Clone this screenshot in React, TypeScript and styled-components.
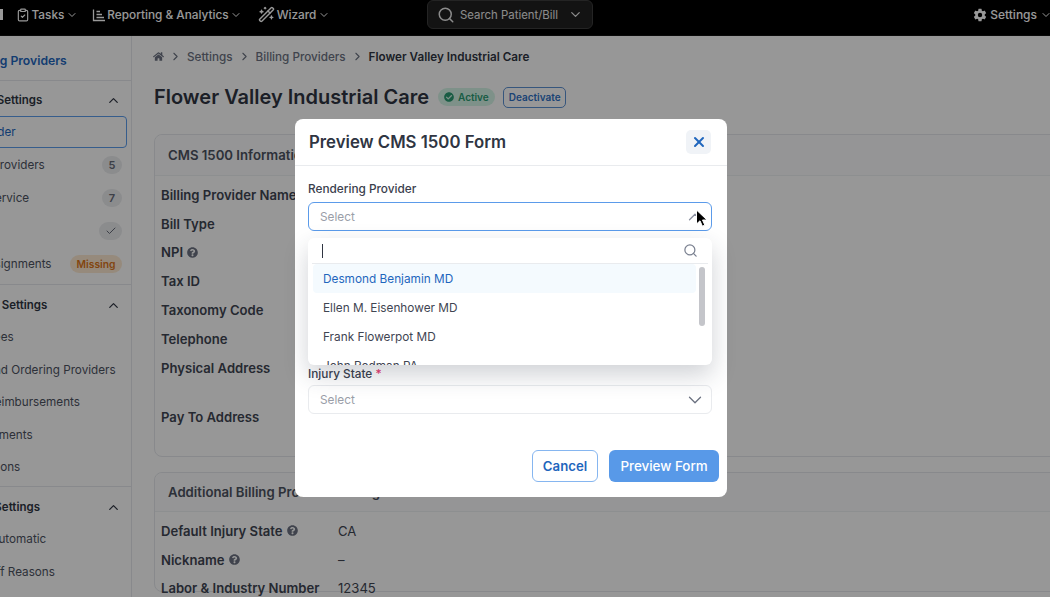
import React, { FC } from 'react';
import styled, { createGlobalStyle } from 'styled-components';
import {
  ChevronDown,
  ChevronUp,
  ChevronRight,
  ClipboardCheck,
  WandSparkles,
  Search,
  Check,
  X,
} from 'lucide-react';
import { FaHome, FaQuestionCircle, FaCheckCircle } from 'react-icons/fa';
import { IoSettingsSharp } from 'react-icons/io5';

const GlobalStyle = createGlobalStyle`
  * {
    margin: 0;
    box-sizing: border-box;
  }
  html, body {
    width: 100%;
    height: 100%;
    overflow: hidden;
    background: #fcfcfc;
    font-family: Inter, "Liberation Sans", sans-serif;
    color: #2f3542;
  }
`;

const Root = styled.div`
  position: relative;
  width: 1050px;
  height: 597px;
  overflow: hidden;
`;

// Top bar ========================================================================================

const TopBar = styled.header`
  height: 36px;
  background: #000;
  display: grid;
  grid-template-columns: 427px 166px 1fr;
  color: #fff;
  border-bottom: 1px solid #111;
`;

const NavLeft = styled.nav`
  display: flex;
  align-items: center;
  height: 29px;
`;

const LogoStub = styled.span`
  width: 3px;
  height: 11px;
  background: #fff;
  margin-right: 13px;
`;

const NavItem = styled.span<{ $gap: number }>`
  display: flex;
  align-items: center;
  gap: 1.5px;
  font-size: 11.8px;
  font-weight: 500;
  margin-right: ${(p) => p.$gap}px;
  white-space: nowrap;
`;

const SearchBox = styled.div`
  height: 29px;
  display: flex;
  align-items: center;
  gap: 5px;
  padding: 0 9px;
  background: #202020;
  border: 1px solid #3c3c3c;
  border-radius: 6px;
  font-size: 11.4px;
  white-space: nowrap;
  color: #e8e8e8;
  svg:last-child {
    margin-left: auto;
  }
`;

const NavRight = styled.div`
  display: flex;
  align-items: center;
  justify-content: flex-end;
  height: 29px;
  gap: 3px;
  font-size: 12px;
  font-weight: 500;
  white-space: nowrap;
  margin-right: -2px;
`;

// Page ===========================================================================================

const Body = styled.div`
  display: flex;
  margin-left: -40px;
  height: 561px;
`;

const Sidebar = styled.aside`
  width: 172px;
  flex: none;
  border-right: 1px solid #e3e5ea;
`;

const SideTitle = styled.div`
  height: 45px;
  padding: 4px 0 0 11.5px;
  display: flex;
  align-items: center;
  font-size: 12.2px;
  font-weight: 600;
  color: #1f66bd;
  border-bottom: 1px solid #e3e5ea;
`;

const SideHead = styled.div`
  height: 36px;
  padding: 4px 10px 0 0;
  display: flex;
  align-items: center;
  justify-content: space-between;
  font-size: 11.5px;
  font-weight: 600;
  white-space: nowrap;
`;

const SideItem = styled.div<{ $active?: boolean }>`
  height: ${(p) => (p.$active ? 32 : 33)}px;
  margin: ${(p) => (p.$active ? '-1px 4px 0 0' : '0 9px 0 0')};
  padding-left: 27.4px;
  padding-right: ${(p) => (p.$active ? 5 : 0)}px;
  display: flex;
  align-items: center;
  justify-content: space-between;
  font-size: 11.7px;
  color: ${(p) => (p.$active ? '#1f66bd' : '#4c5260')};
  white-space: nowrap;
  border: ${(p) => (p.$active ? '1px solid #5b9bea' : 'none')};
  border-radius: 4px;
`;

const SideSection = styled.section<{ $dense?: boolean }>`
  padding-bottom: ${(p) => (p.$dense ? 2.5 : 4)}px;
  & + & {
    border-top: 1px solid #e3e5ea;
  }
  ${SideHead} {
    padding-top: ${(p) => (p.$dense ? 4 : 2)}px;
  }
  ${SideItem} {
    ${(p) => (p.$dense ? 'height: 32.5px;' : '')}
  }
`;

const ShiftedLabel = styled.span<{ $shift: number }>`
  margin-left: ${(p) => p.$shift}px;
`;

const CountBadge = styled.span`
  min-width: 20px;
  height: 18px;
  border-radius: 9px;
  background: #e8e9ec;
  display: flex;
  align-items: center;
  justify-content: center;
  font-size: 11px;
  font-weight: 600;
  color: #666b78;
`;

const CheckBadge = styled(CountBadge)`
  width: 23px;
`;

const MissingBadge = styled.span`
  height: 18px;
  padding: 0 6.5px;
  border-radius: 9px;
  background: #fbe7cf;
  display: flex;
  align-items: center;
  font-size: 10.3px;
  font-weight: 600;
  color: #d9741a;
`;

const Main = styled.main`
  flex: 1;
  min-width: 0;
  padding: 12px 0 0 22px;
`;

const Crumbs = styled.div`
  display: flex;
  align-items: center;
  gap: 5px;
  height: 17px;
  font-size: 11.7px;
  font-weight: 500;
  color: #6b7180;
`;

const HomeIcon = styled(FaHome)`
  margin-left: -1px;
`;

const CrumbCurrent = styled.span`
  color: #2f3542;
  font-weight: 600;
`;

const TitleRow = styled.div`
  display: flex;
  align-items: center;
  margin-top: 19px;
  height: 26px;
`;

const PageTitle = styled.h1`
  font-size: 20px;
  font-weight: 600;
  color: #2f3542;
  white-space: nowrap;
`;

const StatusPill = styled.span`
  margin-left: 9px;
  height: 18px;
  padding: 0 6px;
  display: flex;
  align-items: center;
  gap: 4px;
  border-radius: 9px;
  background: #d3f2e4;
  color: #2a9a72;
  font-size: 10px;
  font-weight: 600;
`;

const OutlineButton = styled.span`
  margin-left: 8.5px;
  height: 21px;
  padding: 0 4.5px;
  display: flex;
  align-items: center;
  border: 1px solid #5b8fd0;
  border-radius: 5px;
  color: #2f70c4;
  font-size: 10px;
  font-weight: 600;
`;

const Card = styled.section<{ $height: number }>`
  margin-top: ${(p) => (p.$height > 200 ? 24 : 15)}px;
  height: ${(p) => p.$height}px;
  margin-right: -30px;
  border: 1px solid #e3e5ea;
  border-radius: 8px;
`;

const CardHead = styled.div<{ $height: number }>`
  height: ${(p) => p.$height}px;
  padding: 0 13px;
  display: flex;
  align-items: center;
  background: #f8f9fa;
  border-bottom: 1px solid #eceef1;
  border-radius: 8px 8px 0 0;
  font-size: 13.2px;
  font-weight: 600;
  color: #4c5260;
  white-space: nowrap;
`;

const Rows = styled.div`
  padding: 4.5px 6px;
`;

const Row = styled.div<{ $tall?: boolean }>`
  height: ${(p) => (p.$tall ? 50 : 28.75)}px;
  display: flex;
  align-items: ${(p) => (p.$tall ? 'flex-start' : 'center')};
  padding-top: ${(p) => (p.$tall ? 7 : 0)}px;
  font-size: 13.1px;
`;

const RowLabel = styled.span`
  width: 177px;
  flex: none;
  display: flex;
  align-items: center;
  gap: 4px;
  font-weight: 600;
  color: #3f4552;
  white-space: nowrap;
`;

const RowValue = styled.span`
  color: #3f4552;
`;

// Modal ==========================================================================================

const Overlay = styled.div`
  position: absolute;
  inset: 0;
  background: rgba(0, 0, 0, 0.4);
  display: flex;
  justify-content: center;
  padding: 119px 28px 0 0;
`;

const Modal = styled.div`
  position: relative;
  width: 432px;
  height: 378px;
  background: #fff;
  border-radius: 8px;
  display: flex;
  flex-direction: column;
`;

const ModalHead = styled.div`
  height: 47px;
  padding: 0 16px 0 14px;
  display: flex;
  align-items: center;
  justify-content: space-between;
  border-bottom: 1px solid #e9ebee;
`;

const ModalTitle = styled.h2`
  font-size: 16.75px;
  font-weight: 600;
  color: #2f3542;
`;

const CloseButton = styled.span`
  width: 25px;
  height: 24px;
  border-radius: 5px;
  background: #f0f3f7;
  display: flex;
  align-items: center;
  justify-content: center;
  color: #1f66bd;
`;

const ModalBody = styled.div`
  flex: 1;
  padding: 16px 15px 0 13px;
`;

const FieldLabel = styled.label`
  display: block;
  font-size: 11.8px;
  font-weight: 500;
  line-height: 15px;
  color: #3a404d;
`;

const Required = styled.span`
  color: #e8336d;
`;

const SelectBox = styled.div<{ $open?: boolean }>`
  margin-top: ${(p) => (p.$open ? 5 : 3)}px;
  height: 29px;
  padding: 0 5px 0 11px;
  display: flex;
  align-items: center;
  justify-content: space-between;
  border: ${(p) => (p.$open ? '1.5px solid #5b9bea' : '1px solid #e9ebee')};
  border-radius: 6px;
  font-size: 11.8px;
  color: #9a9ea8;
  background: #fff;
`;

const SecondField = styled.div`
  margin-top: 136px;
`;

const ModalFoot = styled.div`
  display: flex;
  justify-content: flex-end;
  gap: 11px;
  padding: 0 8px 15px 0;
`;

const CancelButton = styled.span`
  width: 66px;
  height: 32px;
  border: 1px solid #86b6f0;
  border-radius: 6px;
  display: flex;
  align-items: center;
  justify-content: center;
  font-size: 13.2px;
  font-weight: 600;
  color: #1f66bd;
`;

const PreviewButton = styled.span`
  width: 110px;
  height: 32px;
  border-radius: 6px;
  background: #5899e8;
  display: flex;
  align-items: center;
  justify-content: center;
  font-size: 13.4px;
  font-weight: 500;
  color: #fff;
`;

const Dropdown = styled.div`
  position: absolute;
  left: 13px;
  top: 119px;
  width: 404px;
  height: 127px;
  background: #fff;
  border-radius: 6px;
  box-shadow: 0 10px 24px rgba(40, 50, 70, 0.22);
  overflow: hidden;
`;

const DropdownSearch = styled.div`
  height: 26px;
  margin: 0 4px;
  padding: 0 10px 0 10px;
  display: flex;
  align-items: center;
  justify-content: space-between;
  border-bottom: 1px solid #e9ebee;
  color: #7a8090;
`;

const Caret = styled.span`
  width: 1px;
  height: 14px;
  background: #2f3542;
`;

const OptionList = styled.div`
  position: relative;
  padding: 0 16px 0 5px;
`;

const Option = styled.div<{ $active?: boolean }>`
  height: 29px;
  padding-left: 10px;
  display: flex;
  align-items: center;
  border-radius: 4px;
  font-size: 11.8px;
  background: ${(p) => (p.$active ? '#f4fafe' : 'transparent')};
  color: ${(p) => (p.$active ? '#1f66bd' : '#3f4552')};
`;

const ScrollThumb = styled.div`
  position: absolute;
  right: 7px;
  top: 3px;
  width: 6px;
  height: 59px;
  border-radius: 3px;
  background: #c4c5ca;
`;

const Pointer = styled.svg`
  position: absolute;
  left: 400px;
  top: 90px;
`;

// End Of Modal ===================================================================================

const ReportIcon: FC = () => (
  <svg width="14" height="14" viewBox="0 0 14 14" fill="none" stroke="currentColor" strokeWidth="1.3">
    <path d="M1.5 1.5V12.5H13" />
    <path d="M4.5 3.5H8M4.5 6.5H10M4.5 9.5H12" />
  </svg>
);

const Help: FC = () => <FaQuestionCircle size={11} color="#6b7180" />;

const App: FC = () => (
  <>
    <GlobalStyle />
    <Root>
      <TopBar>
        <NavLeft>
          <LogoStub />
          <NavItem $gap={14}>
            <ClipboardCheck size={14} />
            Tasks
            <ChevronDown size={12} />
          </NavItem>
          <NavItem $gap={16}>
            <ReportIcon />
            Reporting &amp; Analytics
            <ChevronDown size={12} />
          </NavItem>
          <NavItem $gap={0}>
            <WandSparkles size={17} />
            Wizard
            <ChevronDown size={12} />
          </NavItem>
        </NavLeft>
        <SearchBox>
          <Search size={18} />
          Search Patient/Bill
          <ChevronDown size={15} />
        </SearchBox>
        <NavRight>
          <IoSettingsSharp size={14} />
          Settings
          <ChevronDown size={12} />
        </NavRight>
      </TopBar>

      <Body>
        <Sidebar>
          <SideTitle>Billing Providers</SideTitle>
          <SideSection>
            <SideHead>
              Billing Settings
              <ChevronUp size={15} />
            </SideHead>
            <SideItem $active>
              <ShiftedLabel $shift={-19}>Provider</ShiftedLabel>
            </SideItem>
            <SideItem>
              <ShiftedLabel $shift={5}>Providers</ShiftedLabel>
              <CountBadge>5</CountBadge>
            </SideItem>
            <SideItem>
              Service
              <CountBadge>7</CountBadge>
            </SideItem>
            <SideItem>
              ID
              <CheckBadge>
                <Check size={12} />
              </CheckBadge>
            </SideItem>
            <SideItem>
              <ShiftedLabel $shift={-7}>Assignments</ShiftedLabel>
              <MissingBadge>Missing</MissingBadge>
            </SideItem>
          </SideSection>
          <SideSection $dense>
            <SideHead>
              Patient Settings
              <ChevronUp size={15} />
            </SideHead>
            <SideItem>Fees</SideItem>
            <SideItem>and Ordering Providers</SideItem>
            <SideItem>Reimbursements</SideItem>
            <SideItem><ShiftedLabel $shift={-9}>Payments</ShiftedLabel></SideItem>
            <SideItem><ShiftedLabel $shift={-10}>Options</ShiftedLabel></SideItem>
          </SideSection>
          <SideSection $dense>
            <SideHead>
              Claim Settings
              <ChevronUp size={15} />
            </SideHead>
            <SideItem><ShiftedLabel $shift={3}>Automatic</ShiftedLabel></SideItem>
            <SideItem>Off Reasons</SideItem>
          </SideSection>
        </Sidebar>

        <Main>
          <Crumbs>
            <HomeIcon size={11} />
            <ChevronRight size={13} />
            Settings
            <ChevronRight size={13} />
            Billing Providers
            <ChevronRight size={13} />
            <CrumbCurrent>Flower Valley Industrial Care</CrumbCurrent>
          </Crumbs>
          <TitleRow>
            <PageTitle>Flower Valley Industrial Care</PageTitle>
            <StatusPill>
              <FaCheckCircle size={10} />
              Active
            </StatusPill>
            <OutlineButton>Deactivate</OutlineButton>
          </TitleRow>

          <Card $height={323}>
            <CardHead $height={41}>CMS 1500 Information</CardHead>
            <Rows>
              <Row><RowLabel>Billing Provider Name</RowLabel></Row>
              <Row><RowLabel>Bill Type</RowLabel></Row>
              <Row><RowLabel>NPI <Help /></RowLabel></Row>
              <Row><RowLabel>Tax ID</RowLabel></Row>
              <Row><RowLabel>Taxonomy Code</RowLabel></Row>
              <Row><RowLabel>Telephone</RowLabel></Row>
              <Row $tall><RowLabel>Physical Address</RowLabel></Row>
              <Row><RowLabel>Pay To Address</RowLabel></Row>
            </Rows>
          </Card>

          <Card $height={120}>
            <CardHead $height={39}>Additional Billing Provider Settings</CardHead>
            <Rows>
              <Row>
                <RowLabel>Default Injury State <Help /></RowLabel>
                <RowValue>CA</RowValue>
              </Row>
              <Row>
                <RowLabel>Nickname <Help /></RowLabel>
                <RowValue>–</RowValue>
              </Row>
              <Row>
                <RowLabel>Labor &amp; Industry Number</RowLabel>
                <RowValue>12345</RowValue>
              </Row>
            </Rows>
          </Card>
        </Main>
      </Body>

      <Overlay>
        <Modal>
          <ModalHead>
            <ModalTitle>Preview CMS 1500 Form</ModalTitle>
            <CloseButton>
              <X size={16} strokeWidth={3} />
            </CloseButton>
          </ModalHead>
          <ModalBody>
            <FieldLabel>Rendering Provider</FieldLabel>
            <SelectBox $open>
              Select
              <ChevronUp size={22} strokeWidth={1.4} color="#8a8fa0" />
            </SelectBox>
            <SecondField>
              <FieldLabel>
                Injury State <Required>*</Required>
              </FieldLabel>
              <SelectBox>
                Select
                <ChevronDown size={22} strokeWidth={1.4} color="#6b7180" />
              </SelectBox>
            </SecondField>
          </ModalBody>
          <ModalFoot>
            <CancelButton>Cancel</CancelButton>
            <PreviewButton>Preview Form</PreviewButton>
          </ModalFoot>
          <Dropdown>
            <DropdownSearch>
              <Caret />
              <Search size={15} />
            </DropdownSearch>
            <OptionList>
              <Option $active>Desmond Benjamin MD</Option>
              <Option>Ellen M. Eisenhower MD</Option>
              <Option>Frank Flowerpot MD</Option>
              <Option>John Rodman PA</Option>
              <ScrollThumb />
            </OptionList>
          </Dropdown>
          <Pointer width="14" height="20" viewBox="0 0 14 20">
            <path d="M1.5 1V15L5 11.8L7.4 17.2L9.8 16.1L7.5 11H12Z" fill="#000" stroke="#fff" strokeWidth="1" />
          </Pointer>
        </Modal>
      </Overlay>
    </Root>
  </>
);

export default App;
